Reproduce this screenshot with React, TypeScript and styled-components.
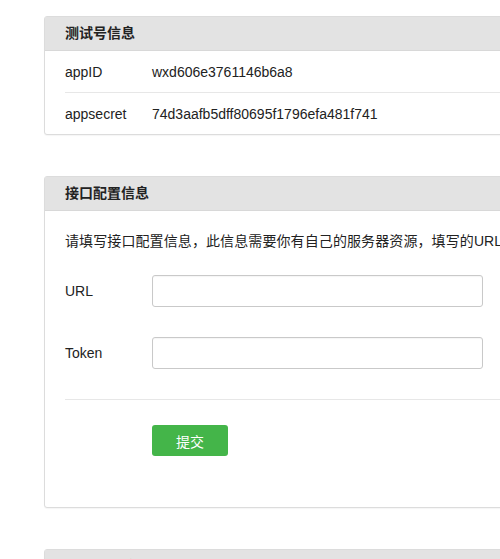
import React from "react";
import styled, { createGlobalStyle } from "styled-components";

const GlobalStyle = createGlobalStyle`
  body {
    margin: 0;
    background: #fff;
    overflow: hidden;
    font-family: "Liberation Sans", "Noto Sans CJK SC", sans-serif;
    color: #222;
    font-size: 14px;
  }
`;

const Page = styled.div`
  padding: 16px 0 0 44px;
  display: flex;
  flex-direction: column;
  gap: 41px;
`;

const Panel = styled.section`
  width: 640px;
  border: 1px solid #dcdcdc;
  border-radius: 3px;
  background: #fff;
  box-shadow: 0 1px 1px rgba(0, 0, 0, 0.04);
`;

const PanelHead = styled.h3`
  margin: 0;
  height: 33px;
  line-height: 33px;
  padding: 0 20px;
  background: #e3e3e3;
  border-bottom: 1px solid #d8d8d8;
  font-size: 14px;
  font-weight: bold;
  color: #222;
`;

const InfoRow = styled.div`
  display: flex;
  align-items: center;
  height: 41px;
  margin: 0 0 0 20px;
  & + & {
    border-top: 1px solid #e7e7e7;
  }
`;

const InfoKey = styled.span`
  width: 87px;
  flex: none;
`;

const InfoValue = styled.span``;

const FormBody = styled.div`
  padding: 20px 0 51px 20px;
`;

const Desc = styled.p`
  margin: 0 0 24px;
  white-space: nowrap;
  line-height: 20px;
  letter-spacing: 0.1px;
`;

const FieldRow = styled.div`
  display: flex;
  align-items: center;
  margin-bottom: 30px;
`;

const FieldLabel = styled.label`
  width: 87px;
  flex: none;
`;

const TextInput = styled.input`
  box-sizing: border-box;
  width: 331px;
  height: 32px;
  border: 1px solid #c9c9c9;
  border-radius: 3px;
  box-shadow: inset 0 1px 1px rgba(0, 0, 0, 0.04);
  outline: none;
`;

const Divider = styled.hr`
  margin: 0 0 25px;
  border: 0;
  border-top: 1px solid #e7e7e7;
`;

const Actions = styled.div`
  padding-left: 87px;
`;

const SubmitButton = styled.button`
  width: 76px;
  height: 31px;
  border: 0;
  border-radius: 3px;
  background: #44b549;
  color: #fff;
  font-family: "Noto Sans CJK SC", sans-serif;
  font-size: 14px;
  cursor: pointer;
`;

export default function App() {
  return (
    <>
      <GlobalStyle />
      <Page>
        <Panel>
          <PanelHead>测试号信息</PanelHead>
          <InfoRow>
            <InfoKey>appID</InfoKey>
            <InfoValue>wxd606e3761146b6a8</InfoValue>
          </InfoRow>
          <InfoRow>
            <InfoKey>appsecret</InfoKey>
            <InfoValue>74d3aafb5dff80695f1796efa481f741</InfoValue>
          </InfoRow>
        </Panel>

        <Panel>
          <PanelHead>接口配置信息</PanelHead>
          <FormBody>
            <Desc>
              请填写接口配置信息，此信息需要你有自己的服务器资源，填写的URL需要正确响应微信发送的Token验证，请阅读消息接口使用指南。
            </Desc>
            <FieldRow>
              <FieldLabel>URL</FieldLabel>
              <TextInput type="text" />
            </FieldRow>
            <FieldRow>
              <FieldLabel>Token</FieldLabel>
              <TextInput type="text" />
            </FieldRow>
            <Divider />
            <Actions>
              <SubmitButton type="button">提交</SubmitButton>
            </Actions>
          </FormBody>
        </Panel>

        <Panel>
          <PanelHead>JS接口安全域名</PanelHead>
        </Panel>
      </Page>
    </>
  );
}
